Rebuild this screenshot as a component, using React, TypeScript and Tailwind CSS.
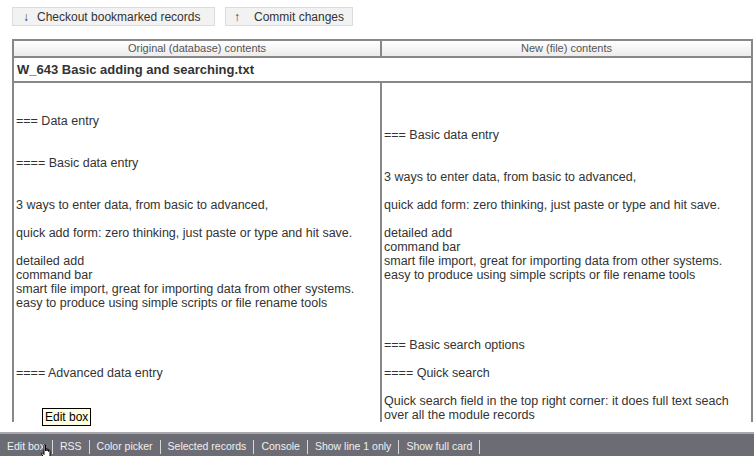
import React from "react";

const leftLines = [
  "",
  "",
  "=== Data entry",
  "",
  "",
  "==== Basic data entry",
  "",
  "",
  "3 ways to enter data, from basic to advanced,",
  "",
  "quick add form: zero thinking, just paste or type and hit save.",
  "",
  "detailed add",
  "command bar",
  "smart file import, great for importing data from other systems.",
  "easy to produce using simple scripts or file rename tools",
  "",
  "",
  "",
  "",
  "==== Advanced data entry",
  "",
  "",
];

const rightLines = [
  "",
  "",
  "",
  "=== Basic data entry",
  "",
  "",
  "3 ways to enter data, from basic to advanced,",
  "",
  "quick add form: zero thinking, just paste or type and hit save.",
  "",
  "detailed add",
  "command bar",
  "smart file import, great for importing data from other systems.",
  "easy to produce using simple scripts or file rename tools",
  "",
  "",
  "",
  "",
  "=== Basic search options",
  "",
  "==== Quick search",
  "",
  "Quick search field in the top right corner: it does full text seach",
  "over all the module records",
];

function Lines({ lines }: { lines: string[] }) {
  return (
    <div className="pt-[3px] pl-[2px]">
      {lines.map((l, i) => (
        <div key={i} className="h-[14px] leading-[14px] whitespace-pre">
          {l || "\u00a0"}
        </div>
      ))}
    </div>
  );
}

const bar = ["Edit box", "RSS", "Color picker", "Selected records", "Console", "Show line 1 only", "Show full card"];

export default function App() {
  return (
    <div className="w-[754px] h-[456px] bg-white relative overflow-hidden text-[#333]" style={{ fontFamily: "'Liberation Sans', Arial, sans-serif" }}>
      <div className="h-[432px] overflow-hidden flex flex-col">
        <div className="flex gap-[10px] pl-[12px] pt-[7px] h-[39px]">
          <button className="h-[19px] w-[203px] bg-[#f2f2f2] border border-[#dcdcdc] flex items-center text-[12px] text-[#333] pl-[10px]">
            <span className="w-[14px] text-left">↓</span>
            <span>Checkout bookmarked records</span>
          </button>
          <button className="h-[19px] w-[128px] bg-[#f2f2f2] border border-[#dcdcdc] flex items-center text-[12px] text-[#333] pl-[8px]">
            <span className="w-[20px] text-left">↑</span>
            <span>Commit changes</span>
          </button>
        </div>
        <div className="ml-[12px] w-[741px] h-[383px] border-t-2 border-l-2 border-r-2 border-[#888] overflow-hidden">
          <div className="flex h-[17px] border-b-2 border-[#888] bg-gradient-to-b from-white to-[#ececec] text-[11px] text-[#555]">
            <div className="w-[368px] border-r-2 border-[#888] flex items-center justify-center">Original (database) contents</div>
            <div className="flex-1 flex items-center justify-center">New (file) contents</div>
          </div>
          <div className="h-[25px] border-b-2 border-[#888] flex items-center pl-[3px] text-[13px] font-bold text-[#333]">
            W_643 Basic adding and searching.txt
          </div>
          <div className="flex text-[12.5px] text-[#333]">
            <div className="w-[368px] border-r-2 border-[#888] h-[400px]">
              <Lines lines={leftLines} />
            </div>
            <div className="flex-1">
              <Lines lines={rightLines} />
            </div>
          </div>
        </div>
      </div>
      <div className="h-[24px] border-t-2 border-[#a9a9ad] bg-[#6c6c74] flex items-center pt-[3px] pl-[7px] text-[10.5px] text-[#f0f0f0]">
        {bar.map((b) => (
          <React.Fragment key={b}>
            <span>{b}</span>
            <span className="mx-[7px] w-px h-[14px] bg-[#d8d8d8]" />
          </React.Fragment>
        ))}
      </div>
      <div className="absolute left-[42px] top-[408px] h-[18px] px-[2px] border border-black bg-[#ffffe1] text-[12px] text-black leading-[16px]">
        Edit box
      </div>
      <svg className="absolute left-[40px] top-[444px]" width="14" height="16" viewBox="0 0 14 16">
        <path d="M4 1 C4 0.4 5.5 0.4 5.5 1 L5.5 7 L5.5 5 C5.5 4.4 7 4.4 7 5 L7 7 L7 5.5 C7 5 8.5 5 8.5 5.5 L8.5 7.5 L8.5 6.5 C8.5 6 10 6 10 6.5 L10 11 C10 13 9 14.5 9 14.5 L4.5 14.5 L1.5 10 C1 9 2 8.5 2.5 9 L4 10.5 Z" fill="white" stroke="black" strokeWidth="1" />
      </svg>
    </div>
  );
}
